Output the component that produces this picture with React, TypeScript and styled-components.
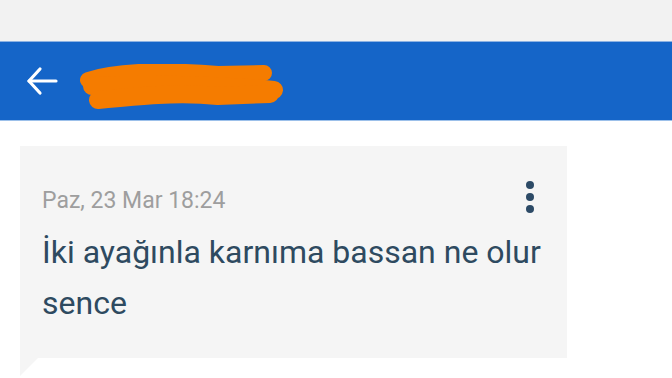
import styled, { createGlobalStyle } from "styled-components";

const GlobalStyle = createGlobalStyle`
    html, body {
        margin: 0;
        padding: 0;
        background: #ffffff;
        font-family: Roboto, "Noto Sans", sans-serif;
    }
`;

const Page = styled.div`
    width: 672px;
    height: 378px;
    overflow: hidden;
    display: flex;
    flex-direction: column;
    background: #ffffff;
`;

const StatusBand = styled.div`
    height: 41px;
    background: #f2f2f2;
    flex-shrink: 0;
`;

const AppBar = styled.div`
    height: 80px;
    flex-shrink: 0;
    background: #1565c8;
    border-top: 1px solid #8db2e2;
    border-bottom: 1px solid #9cc0ea;
    box-sizing: border-box;
    display: flex;
    align-items: center;
    padding-left: 26px;
    gap: 20px;
`;

const BackButton = styled.div`
    width: 32px;
    height: 32px;
    display: flex;
    align-items: center;
    justify-content: center;
`;

const TitleWrap = styled.div`
    position: relative;
    height: 48px;
    display: flex;
    align-items: center;
`;

const Title = styled.span`
    color: #ffffff;
    font-size: 22px;
    font-weight: 500;
    padding-left: 10px;
`;

const Scribble = styled.svg`
    position: absolute;
    left: 0;
    top: 7px;
`;

const Content = styled.div`
    padding: 25px 0 0 20px;
`;

const Bubble = styled.div`
    position: relative;
    width: 547px;
    height: 212px;
    background: #f5f5f5;
    box-sizing: border-box;
    padding: 34px 20px 0 22px;

    &::after {
        content: "";
        position: absolute;
        left: 0;
        top: 100%;
        border-top: 18px solid #f5f5f5;
        border-right: 18px solid transparent;
    }
`;

const HeaderRow = styled.div`
    display: flex;
    align-items: center;
    justify-content: space-between;
    padding-right: 13px;
`;

const DateText = styled.span`
    font-size: 23px;
    color: #9e9e9e;
    line-height: 30px;
    margin-top: 6px;
`;

const Kebab = styled.div`
    display: flex;
    flex-direction: column;
    gap: 4px;
    margin-top: -2px;
`;

const Dot = styled.span`
    width: 8px;
    height: 8px;
    border-radius: 50%;
    background: #2c4a66;
`;

const Message = styled.div`
    font-size: 32px;
    color: #2e4a60;
    line-height: 51px;
    margin-top: 11px;
`;

function App(): JSX.Element {
    return (
        <Page>
            <GlobalStyle />
            <StatusBand />
            <AppBar>
                <BackButton>
                    <svg width="32" height="30" viewBox="0 0 32 30" fill="none" stroke="#ffffff" strokeWidth="3.2" strokeLinecap="round" strokeLinejoin="round">
                        <path d="M30 15H3" />
                        <path d="M14 3L3 15l11 12" />
                    </svg>
                </BackButton>
                <TitleWrap>
                    <Title>kullanıcı</Title>
                    <Scribble width="210" height="50" viewBox="0 0 210 50">
                        <path d="M10 16 C40 6 90 6 140 10 L186 9" stroke="#f57c00" strokeWidth="16" strokeLinecap="round" fill="none" />
                        <path d="M14 22 C60 20 130 20 196 26" stroke="#f57c00" strokeWidth="18" strokeLinecap="round" fill="none" />
                        <path d="M20 36 C60 32 100 28 140 32 L192 30" stroke="#f57c00" strokeWidth="18" strokeLinecap="round" fill="none" />
                    </Scribble>
                </TitleWrap>
            </AppBar>
            <Content>
                <Bubble>
                    <HeaderRow>
                        <DateText>Paz, 23 Mar 18:24</DateText>
                        <Kebab>
                            <Dot />
                            <Dot />
                            <Dot />
                        </Kebab>
                    </HeaderRow>
                    <Message>İki ayağınla karnıma bassan ne olur sence</Message>
                </Bubble>
            </Content>
        </Page>
    );
}

export default App;
